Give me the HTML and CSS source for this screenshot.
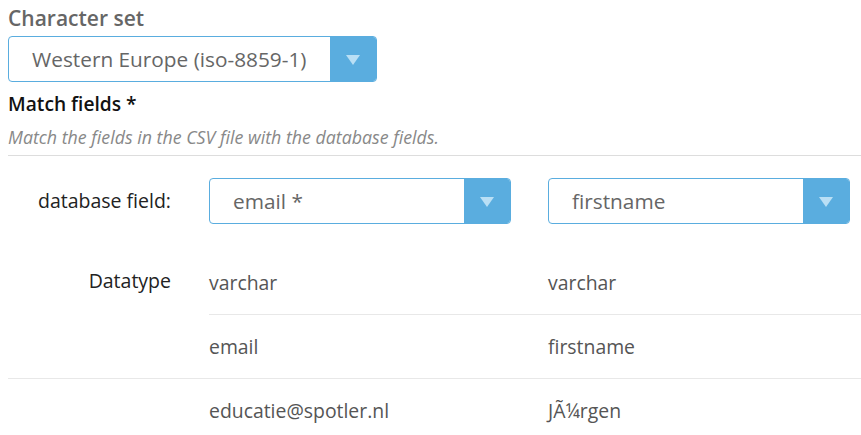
FILE: index.html
```html
<!DOCTYPE html>
<html>
<head>
<meta charset="utf-8">
<link rel="stylesheet" href="styles.css">
</head>
<body>
<div class="page">
  <div class="section-title">Character set</div>
  <div class="select select-wide">
    <div class="select-value">Western Europe (iso-8859-1)</div>
    <div class="select-btn"><span class="caret"></span></div>
  </div>
  <div class="match-title">Match fields *</div>
  <div class="help">Match the fields in the CSV file with the database fields.</div>
  <div class="divider"></div>

  <div class="row row-selects">
    <div class="label">database field:</div>
    <div class="cell cell-a">
      <div class="select">
        <div class="select-value">email *</div>
        <div class="select-btn"><span class="caret"></span></div>
      </div>
    </div>
    <div class="cell cell-b">
      <div class="select">
        <div class="select-value">firstname</div>
        <div class="select-btn"><span class="caret"></span></div>
      </div>
    </div>
  </div>

  <div class="row data-row">
    <div class="label label-data">Datatype</div>
    <div class="cell cell-a text">varchar</div>
    <div class="cell cell-b text">varchar</div>
  </div>
  <div class="row data-row line-partial">
    <div class="label"></div>
    <div class="cell cell-a text bordered">email</div>
    <div class="cell cell-b text bordered">firstname</div>
  </div>
  <div class="row data-row line-full">
    <div class="label"></div>
    <div class="cell cell-a text">educatie@spotler.nl</div>
    <div class="cell cell-b text">JÃ¼rgen</div>
  </div>
</div>
</body>
</html>
```
FILE: styles.css
```css
html, body {
  margin: 0;
  padding: 0;
  background: #ffffff;
}
body {
  font-family: "Open Sans", "Noto Sans", sans-serif;
  overflow: hidden;
}
.page {
  padding: 5px 0 0 8px;
}
.section-title {
  font-size: 21px;
  font-weight: 600;
  color: #666666;
  line-height: 26px;
}
.select {
  display: flex;
  height: 46px;
  width: 302px;
  box-sizing: border-box;
  border: 1px solid #5aaddf;
  border-radius: 4px;
  overflow: hidden;
  background: #ffffff;
}
.select-wide {
  width: 369px;
  margin-top: 5px;
}
.select-value {
  flex: 1;
  padding-left: 23px;
  font-size: 20.8px;
  line-height: 44px;
  color: #666666;
  white-space: nowrap;
}
.select-btn {
  width: 46px;
  background: #5aaddf;
  display: flex;
  align-items: center;
  justify-content: center;
}
.caret {
  width: 0;
  height: 0;
  border-left: 7px solid transparent;
  border-right: 7px solid transparent;
  border-top: 10px solid #b9dff5;
  margin-top: 1px;
}
.match-title {
  margin-top: 10px;
  font-size: 19.2px;
  font-weight: 600;
  color: #111111;
  line-height: 24px;
}
.help {
  margin-top: 10px;
  font-size: 17.8px;
  font-style: italic;
  color: #888888;
  line-height: 22px;
}
.divider {
  margin-top: 7px;
  border-top: 1px solid #dddddd;
}
.row {
  display: flex;
}
.label {
  width: 163px;
  padding-right: 38px;
  text-align: right;
  font-size: 19.5px;
  color: #222222;
  line-height: 24px;
  flex: none;
}
.cell-a {
  width: 339px;
  flex: none;
}
.cell-b {
  flex: 1;
}
.row-selects {
  padding: 22px 0 27px;
  align-items: center;
}
.data-row .label,
.data-row .cell {
  padding-top: 20px;
  padding-bottom: 19px;
}
.data-row .label-data {
  padding-top: 18px;
  padding-bottom: 21px;
}
.text {
  font-size: 19.4px;
  color: #555555;
  line-height: 24px;
}
.bordered {
  border-top: 1px solid #e8e8e8;
}
.line-partial .label {
  padding-top: 21px;
}
.line-full {
  border-top: 1px solid #e8e8e8;
}
```
